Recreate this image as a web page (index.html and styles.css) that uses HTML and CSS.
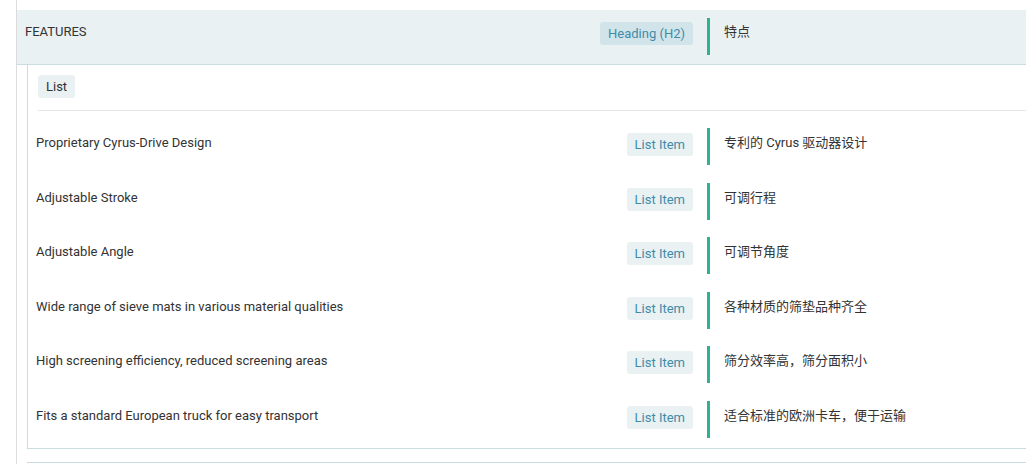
FILE: index.html
```html
<!DOCTYPE html>
<html lang="zh-CN">
<head>
    <meta charset="UTF-8">
    <meta name="viewport" content="width=device-width, initial-scale=1.0">
    <title>Translation Editor</title>
    <link rel="stylesheet" href="styles.css">
</head>
<body>
    <div class="doc">
        <!-- Heading -->
        <div class="segment heading-row">
            <div class="source">
                <span class="source-text">FEATURES</span>
                <span class="tag tag-heading">Heading (H2)</span>
            </div>
            <div class="target">特点</div>
        </div>

        <!-- List -->
        <div class="list-block">
            <div class="list-head">
                <span class="tag tag-list">List</span>
            </div>
            <div class="list-items">
                <div class="segment item-row">
                    <div class="source">
                        <span class="source-text">Proprietary Cyrus-Drive Design</span>
                        <span class="tag">List Item</span>
                    </div>
                    <div class="target">专利的 Cyrus 驱动器设计</div>
                </div>
                <div class="segment item-row">
                    <div class="source">
                        <span class="source-text">Adjustable Stroke</span>
                        <span class="tag">List Item</span>
                    </div>
                    <div class="target">可调行程</div>
                </div>
                <div class="segment item-row">
                    <div class="source">
                        <span class="source-text">Adjustable Angle</span>
                        <span class="tag">List Item</span>
                    </div>
                    <div class="target">可调节角度</div>
                </div>
                <div class="segment item-row">
                    <div class="source">
                        <span class="source-text">Wide range of sieve mats in various material qualities</span>
                        <span class="tag">List Item</span>
                    </div>
                    <div class="target">各种材质的筛垫品种齐全</div>
                </div>
                <div class="segment item-row">
                    <div class="source">
                        <span class="source-text">High screening efficiency, reduced screening areas</span>
                        <span class="tag">List Item</span>
                    </div>
                    <div class="target">筛分效率高，筛分面积小</div>
                </div>
                <div class="segment item-row">
                    <div class="source">
                        <span class="source-text">Fits a standard European truck for easy transport</span>
                        <span class="tag">List Item</span>
                    </div>
                    <div class="target">适合标准的欧洲卡车，便于运输</div>
                </div>
            </div>
        </div>

        <div class="next-block"></div>
    </div>
</body>
</html>
```

FILE: styles.css
```css
html {
    overflow: hidden;
}

body {
    font-family: Roboto, "Noto Sans CJK SC", sans-serif;
    font-size: 13px;
    color: #333;
    background-color: #fff;
    margin: 0;
    padding: 0;
    width: 1026px;
}

.doc {
    margin-left: 16px;
    padding-top: 10px;
    border-left: 1px solid #dcdcdc;
    min-height: 464px;
    box-sizing: border-box;
}

.segment {
    display: flex;
    align-items: flex-start;
}

.source {
    flex: 1;
    display: flex;
    justify-content: space-between;
    align-items: flex-start;
}

.source-text {
    line-height: 17px;
    padding-top: 5px;
}

.target {
    width: 319px;
    box-sizing: border-box;
    margin-left: 14px;
    height: 37px;
    border-left: 3px solid #2db393;
    padding: 5px 0 0 14px;
    line-height: 17px;
}

.tag {
    display: inline-block;
    height: 23px;
    line-height: 23px;
    padding: 0 8px;
    margin-top: 5px;
    border-radius: 3px;
    background-color: #e9f1f3;
    color: #3f8ca9;
}

/* Heading */
.heading-row {
    background-color: #e9f1f3;
    border-bottom: 1px solid #c9dce0;
    padding: 8px 0 9px 8px;
}

.tag-heading {
    background-color: #d1e4e9;
    margin-top: 4px;
}

/* List */
.list-block {
    margin-left: 10px;
    border-left: 1px solid #c9dce0;
    border-bottom: 1px solid #c9dce0;
    padding-bottom: 2px;
}

.list-head {
    margin-left: 10px;
    padding: 10px 0 12px;
    border-bottom: 1px solid #e6e6e6;
}

.tag-list {
    margin-top: 0;
    color: #333;
}

.list-items {
    padding-top: 8px;
}

.item-row {
    padding: 9px 0 8.5px 8px;
}

.item-row .source-text {
    padding-top: 6px;
}

.item-row .target {
    padding-top: 6px;
}

.next-block {
    margin: 13px 0 0 10px;
    border-top: 1px solid #c9dce0;
    height: 20px;
}
```
